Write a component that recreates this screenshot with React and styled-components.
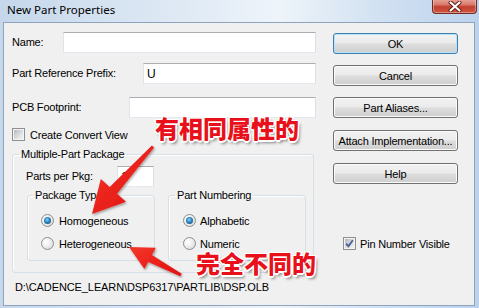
import React from "react";
import styled, { createGlobalStyle } from "styled-components";

const GlobalStyle = createGlobalStyle`
  html, body {
    margin: 0;
    padding: 0;
    background: #fff;
  }
  body {
    font-family: "Liberation Sans", Arial, sans-serif;
    font-size: 11px;
    color: #000;
  }
`;

const Window = styled.div`
  position: relative;
  width: 479px;
  height: 308px;
  box-sizing: border-box;
  padding: 0 4px 2px 3px;
  display: flex;
  flex-direction: column;
  overflow: hidden;
  background: linear-gradient(
    90deg,
    #c6d7eb 0%,
    #d5e2f0 22%,
    #e4edf7 45%,
    #eef4fa 58%,
    #d3e2f2 78%,
    #bcd2ec 100%
  );
`;

const TitleBar = styled.div`
  height: 22px;
  display: flex;
  align-items: flex-start;
  justify-content: space-between;
`;

const Title = styled.div`
  font-family: "Noto Sans", sans-serif;
  font-size: 11.5px;
  line-height: 20px;
  padding-left: 4px;
  color: #000;
`;

const CloseButton = styled.div`
  width: 45px;
  height: 15px;
  margin-right: -2px;
  margin-top: -1px;
  box-sizing: border-box;
  border: 1px solid #6f2c25;
  border-top: none;
  border-radius: 0 0 4px 4px;
  background: linear-gradient(#e8a597 0%, #d97b6c 40%, #c2402f 55%, #d2553f 100%);
  box-shadow: inset 0 0 0 1px rgba(255, 255, 255, 0.35);
  display: flex;
  align-items: center;
  justify-content: center;
`;

const Client = styled.div`
  flex: 1;
  border: 1px solid #8ea3bc;
  background: #f0f0f0;
  display: grid;
  grid-template-columns: 304px 125px;
  column-gap: 17px;
  padding: 9px 16px 0 8px;
  align-items: start;
`;

const Column = styled.div`
  display: flex;
  flex-direction: column;
  align-items: flex-start;
`;

const FieldRow = styled.div`
  width: 100%;
  height: 21px;
  margin-top: ${(p) => p.$mt || 0}px;
  display: flex;
  align-items: center;
  justify-content: space-between;
`;

const Label = styled.span`
  width: ${(p) => (p.$w ? `${p.$w}px` : "auto")};
  white-space: nowrap;
  letter-spacing: -0.2px;
  line-height: 13px;
`;

const TextBox = styled.div`
  width: ${(p) => p.$w}px;
  height: 21px;
  box-sizing: border-box;
  background: #fff;
  border: 1px solid;
  border-color: #abadb3 #dbdfe6 #e3e9ef #e2e3ea;
  padding: 0 3px;
  display: flex;
  align-items: center;
  font-size: 12px;
`;

const CheckRow = styled.label`
  display: flex;
  align-items: center;
  gap: ${(p) => p.$gap || 5}px;
  height: 13px;
  margin-top: ${(p) => p.$mt || 0}px;
  margin-left: ${(p) => p.$ml || 0}px;
  letter-spacing: -0.2px;
  white-space: nowrap;
`;

const CheckBox = styled.span`
  position: relative;
  width: 13px;
  height: 13px;
  box-sizing: border-box;
  border: 1px solid #8e8f8f;
  background: #f4f4f4;
  flex: none;
  &::before {
    content: "";
    position: absolute;
    inset: 1px;
    background: linear-gradient(135deg, #b4b9bf 0%, #dfe1e3 60%, #f3f3f3 100%);
  }
  svg {
    position: absolute;
    left: 1px;
    top: 1px;
  }
`;

const Radio = styled.span`
  position: relative;
  width: 13px;
  height: 13px;
  box-sizing: border-box;
  border-radius: 50%;
  border: 1px solid #8e8f8f;
  background: radial-gradient(circle at 35% 35%, #ffffff 0%, #eeeeee 45%, #cfd1d4 100%);
  flex: none;
  &::after {
    content: "";
    display: ${(p) => (p.$checked ? "block" : "none")};
    position: absolute;
    left: 2px;
    top: 2px;
    width: 7px;
    height: 7px;
    border-radius: 50%;
    background: radial-gradient(circle at 45% 40%, #8ed3f7 0%, #2a85c0 45%, #0c3d6a 100%);
  }
`;

const Group = styled.fieldset`
  width: ${(p) => p.$w}px;
  box-sizing: border-box;
  margin: ${(p) => p.$mt || 0}px 0 0 0;
  padding: 0;
  min-width: 0;
  border: 1px solid #d5dfe5;
  border-radius: 3px;
  box-shadow: inset 1px 1px 0 #fff;
`;

const Legend = styled.legend`
  margin-left: ${(p) => p.$ml || 6}px;
  padding: 0 2px;
  line-height: 13px;
  letter-spacing: -0.2px;
  white-space: nowrap;
`;

const GroupBody = styled.div`
  display: flex;
  flex-direction: column;
  align-items: flex-start;
  padding: ${(p) => p.$pad};
`;

const InlineRow = styled.div`
  display: flex;
  align-items: center;
  gap: ${(p) => p.$gap || 0}px;
  margin-top: ${(p) => p.$mt || 0}px;
  margin-left: ${(p) => p.$ml || 0}px;
`;

const PathText = styled.div`
  margin-top: 8px;
  margin-left: 3px;
  line-height: 13px;
  letter-spacing: -0.1px;
  white-space: nowrap;
`;

const Button = styled.div`
  width: 125px;
  height: 21px;
  box-sizing: border-box;
  margin-top: ${(p) => p.$mt || 0}px;
  border: 1px solid ${(p) => (p.$default ? "#3c7fb1" : "#707070")};
  border-radius: 3px;
  background: linear-gradient(#f2f2f2 0%, #ebebeb 48%, #dddddd 52%, #cfcfcf 100%);
  box-shadow: inset 0 0 0 1px ${(p) => (p.$default ? "#b7e3fb" : "#fbfbfb")};
  display: flex;
  align-items: center;
  justify-content: center;
  letter-spacing: -0.2px;
  white-space: nowrap;
`;

const Note = styled.div`
  position: absolute;
  left: ${(p) => p.$x}px;
  top: ${(p) => p.$y}px;
  font-family: "Noto Sans CJK SC", "Noto Sans", sans-serif;
  font-weight: 900;
  font-size: 24px;
  line-height: 1;
  color: #e8101a;
  white-space: nowrap;
  text-shadow: -1px -1px 0 #fff, 1px -1px 0 #fff, -1px 1px 0 #fff, 1px 1px 0 #fff,
    0 -1.5px 0 #fff, 0 1.5px 0 #fff, -1.5px 0 0 #fff, 1.5px 0 0 #fff,
    2px 3px 3px rgba(0, 0, 0, 0.45);
`;

const ArrowLayer = styled.svg`
  position: absolute;
  left: 0;
  top: 0;
  pointer-events: none;
`;

const Check = () => (
  <svg width="9" height="9" viewBox="0 0 9 9">
    <path d="M1.2 4.6 L3.4 7.2 L7.8 1.2" fill="none" stroke="#4a5f97" strokeWidth="1.8" />
  </svg>
);

const CloseGlyph = () => (
  <svg width="14" height="11" viewBox="0 0 14 11">
    <path d="M2.5 1.5 L11.5 9.5 M11.5 1.5 L2.5 9.5" stroke="#5a1a12" strokeWidth="4" strokeLinecap="round" />
    <path d="M2.5 1.5 L11.5 9.5 M11.5 1.5 L2.5 9.5" stroke="#fff" strokeWidth="2.2" strokeLinecap="round" />
  </svg>
);

const Arrows = () => (
  <ArrowLayer width="479" height="308" viewBox="0 0 479 308">
    <defs>
      <filter id="shade" x="-20%" y="-20%" width="140%" height="140%">
        <feDropShadow dx="1" dy="1.5" stdDeviation="1.2" floodColor="#000" floodOpacity="0.35" />
      </filter>
      <linearGradient id="red" x1="0" y1="0" x2="1" y2="1">
        <stop offset="0" stopColor="#f5362a" />
        <stop offset="1" stopColor="#e0100f" />
      </linearGradient>
    </defs>
    <g filter="url(#shade)" fill="url(#red)">
      <polygon points="92,214 126,201.7 117.1,193.7 154.1,147.5 151.9,145.5 109.7,186.9 100.8,178.9" />
      <polygon points="129,247 155.8,247.8 152,254.9 181.7,273.7 180.3,276.3 148.2,261.9 144.4,269" />
    </g>
  </ArrowLayer>
);

export default function App() {
  return (
    <>
      <GlobalStyle />
      <Window>
        <TitleBar>
          <Title>New Part Properties</Title>
          <CloseButton>
            <CloseGlyph />
          </CloseButton>
        </TitleBar>
        <Client>
          <Column>
            <FieldRow>
              <Label>Name:</Label>
              <TextBox $w={253} />
            </FieldRow>
            <FieldRow $mt={10}>
              <Label>Part Reference Prefix:</Label>
              <TextBox $w={173}>U</TextBox>
            </FieldRow>
            <FieldRow $mt={13}>
              <Label>PCB Footprint:</Label>
              <TextBox $w={187} />
            </FieldRow>
            <CheckRow $mt={10} $gap={5}>
              <CheckBox />
              Create Convert View
            </CheckRow>
            <Group $w={302} $mt={7}>
              <Legend>Multiple-Part Package</Legend>
              <GroupBody $pad="5px 0 11px 13px">
                <InlineRow>
                  <Label $w={91}>Parts per Pkg:</Label>
                  <TextBox $w={37}>1</TextBox>
                </InlineRow>
                <InlineRow $gap={13} $mt={2} $ml={1}>
                  <Group $w={128}>
                    <Legend $ml={5}>Package Type</Legend>
                    <GroupBody $pad="12px 0 10px 13px">
                      <CheckRow $gap={5}>
                        <Radio $checked />
                        Homogeneous
                      </CheckRow>
                      <CheckRow $gap={5} $mt={10}>
                        <Radio />
                        Heterogeneous
                      </CheckRow>
                    </GroupBody>
                  </Group>
                  <Group $w={138}>
                    <Legend $ml={6}>Part Numbering</Legend>
                    <GroupBody $pad="12px 0 10px 14px">
                      <CheckRow $gap={4}>
                        <Radio $checked />
                        Alphabetic
                      </CheckRow>
                      <CheckRow $gap={4} $mt={10}>
                        <Radio />
                        Numeric
                      </CheckRow>
                    </GroupBody>
                  </Group>
                </InlineRow>
              </GroupBody>
            </Group>
            <PathText>D:\CADENCE_LEARN\DSP6317\PARTLIB\DSP.OLB</PathText>
          </Column>
          <Column>
            <Button $default $mt={1}>OK</Button>
            <Button $mt={11}>Cancel</Button>
            <Button $mt={11}>Part Aliases...</Button>
            <Button $mt={12}>Attach Implementation...</Button>
            <Button $mt={12}>Help</Button>
            <CheckRow $mt={53} $ml={10} $gap={4}>
              <CheckBox>
                <Check />
              </CheckBox>
              Pin Number Visible
            </CheckRow>
          </Column>
        </Client>
        <Arrows />
        <Note $x={155} $y={116}>有相同属性的</Note>
        <Note $x={196} $y={251}>完全不同的</Note>
      </Window>
    </>
  );
}
